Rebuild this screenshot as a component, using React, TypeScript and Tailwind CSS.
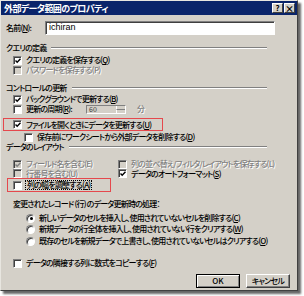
import React from 'react';

const font = "font-['Noto_Sans_CJK_JP',sans-serif] [font-feature-settings:'palt']";

function CheckBox({ checked, disabled }: { checked?: boolean; disabled?: boolean }) {
  return (
    <span
      className={
        'relative inline-block h-[9px] w-[9px] shrink-0 border border-t-[#808080] border-l-[#808080] border-b-white border-r-white shadow-[inset_1px_1px_0_#404040] ' +
        (disabled ? 'bg-[#d4d0c8]' : 'bg-white')
      }
    >
      {checked && (
        <svg className="absolute left-[1px] top-[1px]" width="6" height="6" viewBox="0 0 6 6">
          <path
            d="M0.5 2.5 L2.2 4.3 L5.5 0.8"
            fill="none"
            stroke={disabled ? '#808080' : '#000'}
            strokeWidth="1.4"
          />
        </svg>
      )}
    </span>
  );
}

function Radio({ checked }: { checked?: boolean }) {
  return (
    <span className="relative inline-block h-[9px] w-[9px] shrink-0 rounded-full border border-t-[#808080] border-l-[#808080] border-b-white border-r-white bg-white shadow-[inset_1px_1px_0_#404040]">
      {checked && (
        <span className="absolute left-[2.5px] top-[2.5px] h-[3px] w-[3px] rounded-full bg-black"></span>
      )}
    </span>
  );
}

function Label({ children, disabled }: { children: React.ReactNode; disabled?: boolean }) {
  return (
    <span
      className={
        'whitespace-nowrap leading-none tracking-[-0.8px] font-medium ' +
        (disabled ? 'text-[#808080] [text-shadow:1px_1px_0_#fff]' : 'text-black')
      }
    >
      {children}
    </span>
  );
}

function Group({ title }: { title: string }) {
  return (
    <div className="flex items-center h-[10px] pl-[5px] pr-[30px] gap-[5px]">
      <Label>{title}</Label>
      <div className="flex-1 border-t border-t-[#808080] border-b border-b-white"></div>
    </div>
  );
}

export default function App() {
  return (
    <div className={'w-[304px] h-[296px] bg-white text-[8px] ' + font}>
      <div className="flex flex-col w-[298px] h-[291px] bg-[#d4d0c8] border border-t-[#e8e6e0] border-l-[#e8e6e0] border-b-[#404040] border-r-[#404040] shadow-[3px_3px_2px_rgba(0,0,0,0.6)]">
        <div className="flex items-center h-[14px] bg-[#0a246a] pl-[3px] pr-[2px]">
          <span className="flex-1 text-white font-bold text-[9px] tracking-[-0.6px] leading-none whitespace-nowrap">
            外部データ範囲のプロパティ
          </span>
          <div className="flex gap-[1px]">
            <span className="flex items-center justify-center h-[10px] w-[11px] bg-[#d4d0c8] border border-t-white border-l-white border-b-[#404040] border-r-[#404040] text-[8px] font-bold leading-none text-black">
              ?
            </span>
            <span className="flex items-center justify-center h-[10px] w-[11px] bg-[#d4d0c8] border border-t-white border-l-white border-b-[#404040] border-r-[#404040] text-[9px] font-bold leading-none text-black">
              ×
            </span>
          </div>
        </div>

        <div className="flex items-center mt-[6px] h-[14px] pl-[5px]">
          <span className="w-[39px]">
            <Label>名前(<u>N</u>):</Label>
          </span>
          <div className="flex items-center w-[230px] h-[14px] bg-white border border-t-[#808080] border-l-[#808080] border-b-white border-r-white shadow-[inset_1px_1px_0_#404040] pl-[3px] font-['Liberation_Sans',sans-serif] text-[9px]">
            ichiran
          </div>
        </div>

        <div className="mt-[8px]">
          <Group title="クエリの定義" />
        </div>
        <div className="flex items-center gap-[4px] h-[10px] mt-[2px] pl-[12px]">
          <CheckBox checked />
          <Label>クエリの定義を保存する(<u>Q</u>)</Label>
        </div>
        <div className="flex items-center gap-[4px] h-[10px] pl-[12px]">
          <CheckBox disabled />
          <Label disabled>パスワードを保存する(P)</Label>
        </div>

        <div className="mt-[8px]">
          <Group title="コントロールの更新" />
        </div>
        <div className="flex items-center gap-[4px] h-[10px] mt-[1px] pl-[12px]">
          <CheckBox checked />
          <Label>バックグラウンドで更新する(<u>B</u>)</Label>
        </div>
        <div className="flex items-center h-[10px] pl-[12px]">
          <CheckBox />
          <span className="ml-[4px] w-[60px]">
            <Label>更新の周期(<u>R</u>):</Label>
          </span>
          <div className="flex h-[9px] w-[40px] bg-[#d4d0c8] border border-t-[#808080] border-l-[#808080] border-b-white border-r-white">
            <span className="flex-1 pl-[2px] leading-[7px] text-[7px] text-[#404040]">60</span>
            <div className="flex flex-col w-[9px]">
              <span className="flex-1 bg-[#d4d0c8] border-b border-b-[#808080] border-l border-l-white"></span>
              <span className="flex-1 bg-[#d4d0c8] border-l border-l-white"></span>
            </div>
          </div>
          <span className="ml-[11px]">
            <Label disabled>分</Label>
          </span>
        </div>
        <div className="flex items-center gap-[4px] h-[13px] mt-[4px] ml-[2px] w-[160px] border border-[#e5484d] pl-[9px]">
          <CheckBox checked />
          <Label>ファイルを開くときにデータを更新する(<u>U</u>)</Label>
        </div>
        <div className="flex items-center gap-[4px] h-[10px] mt-[1px] pl-[23px]">
          <CheckBox />
          <Label>保存前にワークシートから外部データを削除する(<u>D</u>)</Label>
        </div>

        <div>
          <Group title="データのレイアウト" />
        </div>
        <div className="grid grid-cols-[105px_1fr] mt-[7px] pl-[12px]">
          <div className="flex items-center gap-[4px] h-[10px]">
            <CheckBox checked disabled />
            <Label disabled>フィールド名を含む(E)</Label>
          </div>
          <div className="flex items-center gap-[4px] h-[10px]">
            <CheckBox disabled />
            <Label disabled>列の並べ替え/フィルタ/レイアウトを保存する(L)</Label>
          </div>
          <div className="flex items-center gap-[4px] h-[9px]">
            <CheckBox disabled />
            <Label disabled>行番号を含む(U)</Label>
          </div>
          <div className="flex items-center gap-[4px] h-[9px]">
            <CheckBox checked />
            <Label>データのオートフォーマット(<u>S</u>)</Label>
          </div>
        </div>
        <div className="flex items-center gap-[3px] h-[14px] ml-[6px] w-[104px] border border-[#e5484d] pl-[5px]">
          <CheckBox />
          <span className="flex items-center border border-dotted border-black px-[1px] h-[10px]">
            <Label>列の幅を調整する(<u>A</u>)</Label>
          </span>
        </div>

        <div className="flex items-center h-[10px] mt-[7px] pl-[12px]">
          <Label>変更されたレコード (行) のデータ更新時の処理：</Label>
        </div>
        <div className="flex items-center gap-[4px] h-[10px] mt-[4px] pl-[25px]">
          <Radio checked />
          <Label>新しいデータのセルを挿入し、使用されていないセルを削除する(<u>C</u>)</Label>
        </div>
        <div className="flex items-center gap-[4px] h-[10px] mt-[1px] pl-[25px]">
          <Radio />
          <Label>新規データの行全体を挿入し、使用されていない行をクリアする(<u>W</u>)</Label>
        </div>
        <div className="flex items-center gap-[4px] h-[10px] mt-[2px] pl-[25px]">
          <Radio />
          <Label>既存のセルを新規データで上書きし、使用されていないセルはクリアする(<u>O</u>)</Label>
        </div>

        <div className="flex items-center gap-[4px] h-[10px] mt-[12px] pl-[12px]">
          <CheckBox />
          <Label>データの隣接する列に数式をコピーする(<u>F</u>)</Label>
        </div>

        <div className="flex justify-end gap-[6px] mt-[6px] pr-[7px]">
          <button className="h-[14px] w-[44px] bg-[#d4d0c8] border border-black shadow-[inset_1px_1px_0_#fff,inset_-1px_-1px_0_#808080] text-[8px] font-medium leading-none">
            OK
          </button>
          <button className="h-[14px] w-[44px] bg-[#d4d0c8] border border-t-white border-l-white border-b-[#404040] border-r-[#404040] shadow-[inset_-1px_-1px_0_#808080] text-[8px] font-medium tracking-[-0.8px] leading-none">
            キャンセル
          </button>
        </div>
      </div>
    </div>
  );
}
